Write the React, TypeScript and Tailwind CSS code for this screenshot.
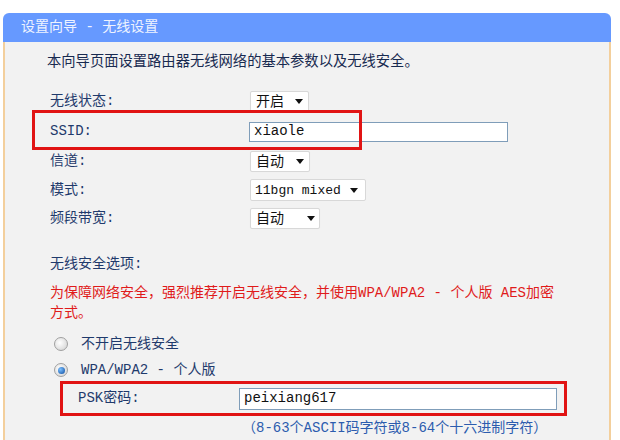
const cjk = "font-['Liberation_Mono','Noto_Sans_CJK_SC',monospace]";

function Caret() {
  return (
    <svg width="8" height="5" viewBox="0 0 8 5" className="shrink-0">
      <path d="M0 0h8L4 5z" fill="#111" />
    </svg>
  );
}

function FakeSelect({ value, width, gap }: { value: string; width: string; gap: string }) {
  return (
    <div
      className={`flex h-[21px] items-center whitespace-nowrap rounded-[2px] border border-[#d8d8d8] bg-white pl-[5px] text-[14px] text-[#111] shadow-[0_0_1px_#e8e8e8] ${width}`}
    >
      <span className="leading-none">{value}</span>
      <span className={gap} />
      <Caret />
    </div>
  );
}

function Radio({ checked }: { checked?: boolean }) {
  return (
    <span className="flex h-[14px] w-[14px] items-center justify-center rounded-full border border-[#a0a0a0] bg-[radial-gradient(circle_at_40%_40%,#ffffff,#cfcfcf)]">
      {checked && <span className="h-[7px] w-[7px] rounded-full bg-[radial-gradient(circle_at_35%_35%,#7cc0ff,#0a4a9e)]" />}
    </span>
  );
}

export default function App() {
  return (
    <div className={`relative h-[440px] w-[620px] overflow-hidden bg-white pt-[13px] ${cjk}`}>
      <div className="ml-[3px] w-[608px]">
        <div className="flex h-[29px] items-center rounded-t-[6px] bg-[#6699ff] pl-[18px] text-[14px] text-[#eef3ff]">
          设置向导 - 无线设置
        </div>
        <div className="h-[420px] border-x-2 border-[#f3cf9c] bg-[#f2f2f2] pl-[45px] pt-[10px] text-[14px] text-[#1f3a6c]">
          <div className="-ml-[3px] h-[20px] text-[14.3px] leading-[20px] text-[#182a50]">
            本向导页面设置路由器无线网络的基本参数以及无线安全。
          </div>

          <div className="mt-[15px] flex h-[29px] items-center">
            <span className="w-[200px]">无线状态:</span>
            <FakeSelect value="开启" width="w-[59px]" gap="w-[11px]" />
          </div>
          <div className="relative flex h-[31px] items-center">
            <span className="w-[199px]">SSID:</span>
            <div className="flex h-[20px] w-[259px] items-center border border-[#7f9db9] bg-white pl-[4px] text-[14px] text-[#111]">
              xiaole
            </div>
            <div className="absolute left-[-18px] top-[-6px] h-[40px] w-[330px] border-[3px] border-[#e11414]" />
          </div>
          <div className="flex h-[29px] items-center">
            <span className="w-[200px]">信道:</span>
            <FakeSelect value="自动" width="w-[60px]" gap="w-[12px]" />
          </div>
          <div className="flex h-[28px] items-center">
            <span className="w-[200px]">模式:</span>
            <div className="flex h-[22px] w-[116px] items-center whitespace-nowrap rounded-[2px] border border-[#d8d8d8] bg-white pl-[4px] text-[13px] text-[#111]">
              <span className="leading-none">11bgn mixed</span>
              <span className="w-[9px]" />
              <Caret />
            </div>
          </div>
          <div className="flex h-[29px] items-center">
            <span className="w-[200px]">频段带宽:</span>
            <FakeSelect value="自动" width="w-[70px]" gap="w-[23px]" />
          </div>

          <div className="mt-[21px] h-[20px] leading-[20px]">无线安全选项:</div>
          <div className="mt-[9px] whitespace-nowrap leading-[20px] text-[#e01b1b]">
            为保障网络安全，强烈推荐开启无线安全，并使用WPA/WPA2 - 个人版 AES加密
            <br />
            方式。
          </div>

          <div className="mt-[9px] flex h-[24px] items-center gap-[13px] pl-[4px]">
            <Radio />
            <span>不开启无线安全</span>
          </div>
          <div className="mt-[3px] flex h-[22px] items-center gap-[13px] pl-[4px]">
            <Radio checked />
            <span>WPA/WPA2 - 个人版</span>
          </div>

          <div className="ml-[10px] flex h-[35px] w-[507px] items-center border-[3px] border-[#e11414] pl-[15px]">
            <span className="w-[161px]">PSK密码:</span>
            <div className="flex h-[22px] w-[318px] items-center border border-[#7f9db9] bg-white pl-[4px] text-[14px] text-[#111]">
              peixiang617
            </div>
          </div>
          <div className="ml-[192px] mt-[2px] h-[20px] text-[14px] leading-[20px] text-[#2c5cae]">
            （8-63个ASCII码字符或8-64个十六进制字符）
          </div>
        </div>
      </div>
    </div>
  );
}
